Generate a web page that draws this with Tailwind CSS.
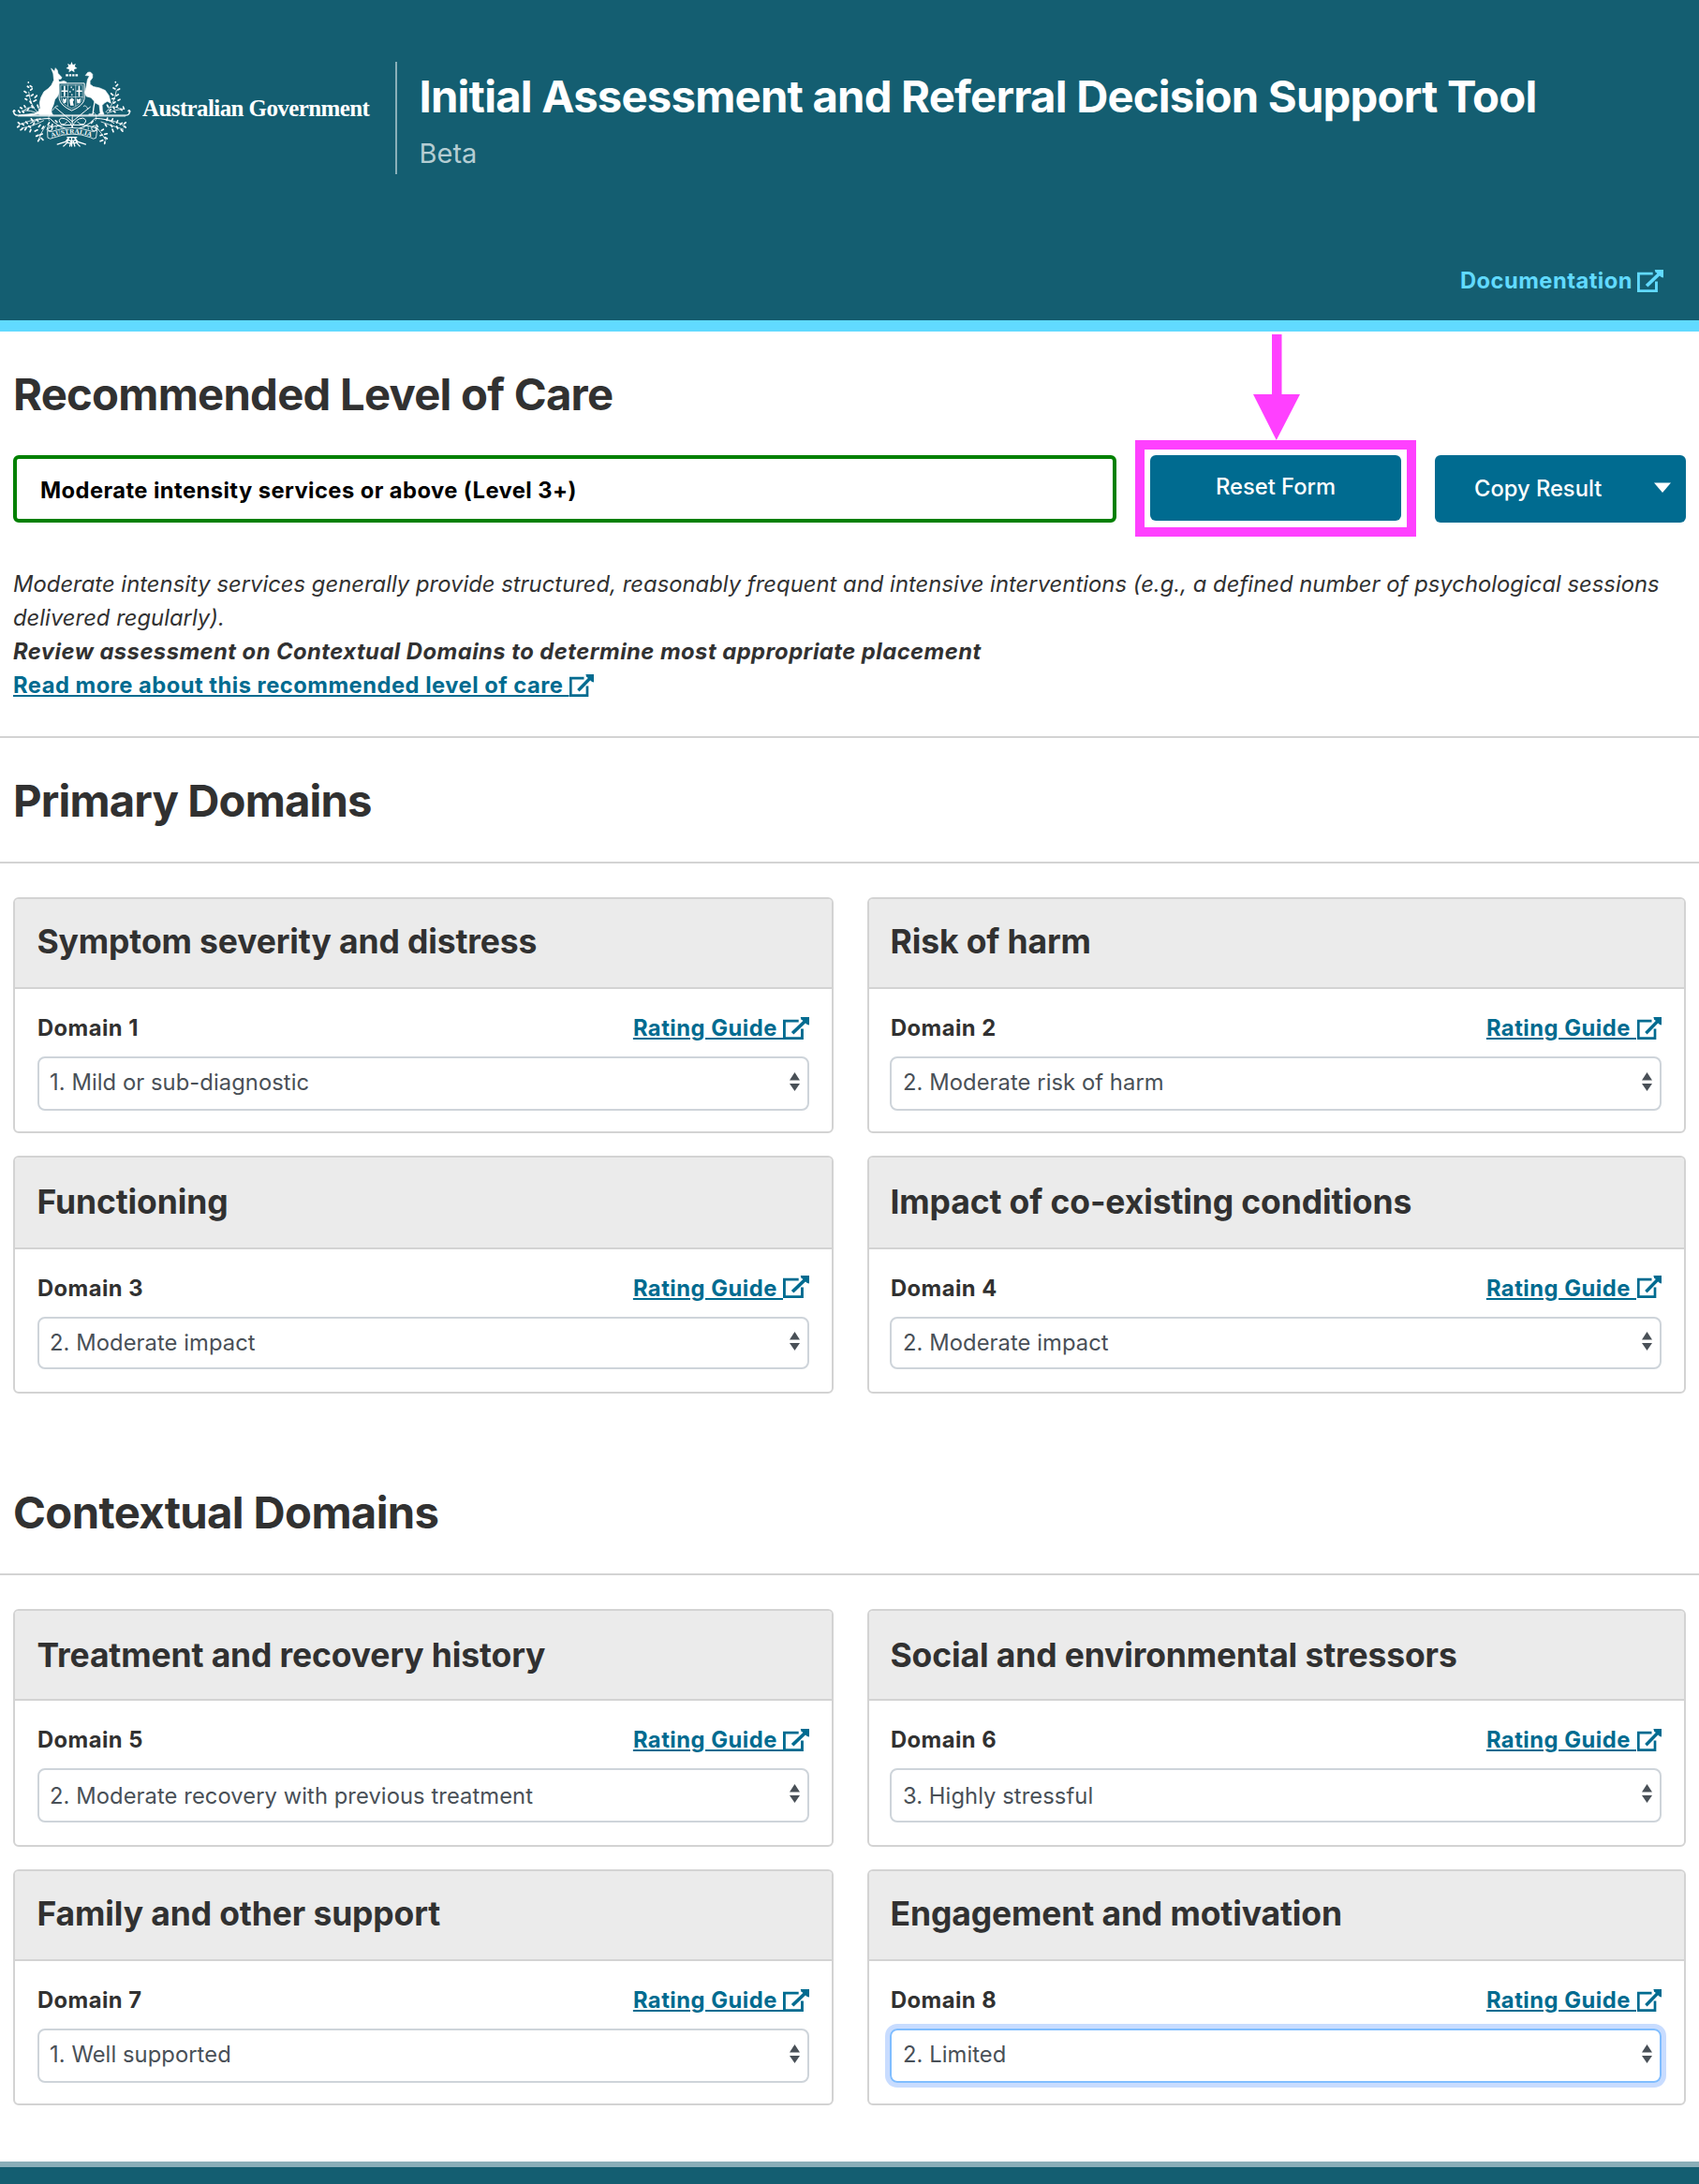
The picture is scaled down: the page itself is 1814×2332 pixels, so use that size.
<!DOCTYPE html>
<html lang="en">
<head>
<meta charset="utf-8">
<title>Initial Assessment and Referral Decision Support Tool</title>
<script src="https://cdn.jsdelivr.net/npm/@tailwindcss/browser@4"></script>
</head>
<body class="bg-white font-['Inter',sans-serif] text-[23.75px] leading-9 text-[#313131] overflow-x-hidden">
<svg width="0" height="0" class="absolute">
  <symbol id="ext" viewBox="0 0 26 24" preserveAspectRatio="none">
    <path d="M15.5 4.2H1.3V22.7H19V12.5" fill="none" stroke="currentColor" stroke-width="2.7"/>
    <path d="M9.4 17.2L22.5 3.8" fill="none" stroke="currentColor" stroke-width="3.4"/>
    <path d="M17.4 0H26V8.4L24 8L18 2.2Z" fill="currentColor"/>
  </symbol>
</svg>

<header class="h-[354px] bg-[#145e71] border-b-12 border-[#61daff] flex flex-col pt-[65px]">
  <div class="flex pl-[13px]">
    <svg class="w-[127px] h-[93px] shrink-0" viewBox="40 30 380 280" fill="none" stroke="#fff" stroke-linecap="round">
      <g fill="#fff" stroke="none">
        <path d="M230 33L234 43L243 39L240 48L248 54L238 57L239 67L230 61L221 67L222 57L212 54L220 48L217 39L226 43Z"/>
        <path d="M211 73h8v7h-8zM222 73h7v7h-7zM232 73h7v7h-7zM242 73h8v7h-8z"/>
        <path stroke="#fff" stroke-width="2" d="M165 55L175 64L178 53L184 60L186 70L198 83L196 88L187 89L190 98L205 95L213 98L212 104L197 105L190 110L192 122L190 131L184 145L176 154L172 170L166 184L165 196L170 203H128L122 201L100 205H60L110 199L124 192L129 182L127 165L131 148L141 129L155 119L165 108L173 92L171 72Z"/>
        <path stroke="#fff" stroke-width="2" d="M275 76L282 67L290 66L297 73L297 84L289 95L289 105L300 113L320 117L338 125L350 142L356 166L345 160L336 165L328 173L329 190L334 202H316L322 198L319 172L306 165L301 158L292 148L277 144L272 132L276 117L279 101L281 90L287 79Z"/>
      </g>
      <path d="M304 162Q300 180 298 202H286" stroke-width="4"/>
      <path d="M190 102H271V152Q268 174 230 190Q194 174 190 152Z" fill="#145e71" stroke-width="3"/>
      <path d="M196 108H265V151Q262 169 230 183Q199 169 196 151Z" stroke-width="1.5"/>
      <path d="M218 108V175M243 108V175M196 146H265" stroke-width="1.7"/>
      <path d="M207 112V142M199 127H215M254 112V142M247 127H262" stroke-width="5"/>
      <path d="M229 114v2M235 121v2M225 128v2M231 138v2" stroke-width="4"/>
      <g fill="#fff" stroke="none">
        <path d="M201 150l6 4 7-5-2 15-8 3zM223 155l8-6 7 6-4 7 3 12h-11l-2-10zM246 151l6 3 8-4-3 15-9 2z"/>
      </g>
      <path d="M44 191Q43 204 55 205H405Q417 204 416 192M48 191Q44 186 42 193M412 191Q416 186 418 193" stroke-width="4"/>
      <path d="M58 208H225M236 208H402" stroke-width="2"/>
      <path d="M232 255V206M232 242Q222 215 198 214Q184 219 195 232Q207 238 215 226M232 242Q242 215 266 214Q282 219 271 232Q258 238 249 226M232 225Q210 207 178 180M232 225Q254 207 290 178M232 252Q190 248 160 215Q120 215 98 230M232 252Q275 248 305 215Q345 215 366 230M228 236Q165 236 150 250M236 236Q290 234 315 250" stroke-width="3"/>
      <path d="M120 195Q98 175 92 130M110 180Q85 175 72 195M118 198Q100 188 72 190M340 195Q366 172 374 125M352 180Q375 172 392 190M344 198Q370 186 400 184M170 188Q180 170 186 175M282 185Q275 168 268 176M130 215Q90 222 60 236M140 222Q108 240 70 246M145 240Q130 262 124 284M335 218Q372 222 402 240M325 226Q358 238 396 250M312 246Q326 262 340 285" stroke-width="2.4"/>
      <!-- wattle blossom -->
      <path d="M91 99v1M88 112l4 3M97 110l5 4M78 128l6 4M98 124l5-4M85 143l6-2M100 142l6-4M112 148l6-6M81 152l5 3M108 160l8-4M96 160l4 6M65 180l5 3M72 192l4 4M78 174l3 5M88 188l4-5M102 174l3 6M120 172l3 8M126 185l2 7M59 190l5 6M371 98v1M378 106l-5 5M364 117l6 3M384 120l-6 3M357 135l6 5M380 138l-7 4M360 152l8-1M385 154l-6 3M370 162l-5 4M344 172l4 7M364 178l3 6M378 172l-3 7M388 184l3 4M396 178l2 6M352 190l4-4M366 192l4 3" stroke-width="5"/>
      <path d="M58 228l5 4M56 243l5-3M70 232l6 4M66 252l6-4M83 226l5 5M80 252l4-6M92 240l6 4M100 216l5 7M106 236l4-7M96 258l3-7M118 218l4 6M124 242l5-6M112 256l8-4M135 248l5-7M116 272l7-3M128 268l8-3M122 288l4-6M138 284l-6-6M404 228l-5 4M404 244l-6-3M392 230l-6 4M394 256l-5-5M378 222l-3 7M378 248l-3-7M362 216l-3 6M360 242l-4-6M364 258l-3-8M345 214l-2 7M342 240l-4-6M326 254l6-4M344 264l-8 2M322 270l6-2M344 280l-7-4M322 288l8-3M336 296l1-6M168 234l-2 8M178 222l5 5M298 224l-5 6M310 236l4 6M158 228l-4 8" stroke-width="5"/>
      <path d="M166 196Q150 210 158 222M300 194Q316 208 306 222M180 250Q180 228 196 244M284 250Q284 228 268 244" stroke-width="2"/>
      <circle cx="160" cy="247" r="8" stroke-width="3"/><circle cx="302" cy="247" r="8" stroke-width="3"/>
      <path d="M153 255Q160 260 170 256Q232 234 292 256Q304 260 312 252L308 278Q300 284 290 276Q232 254 172 277Q160 284 154 278Z" fill="#145e71" stroke-width="2.5"/>
      <path id="rib" d="M165 277Q231 249 300 277" stroke="none"/>
      <text fill="#fff" stroke="none" font-family="Liberation Serif" font-weight="700" font-size="21" textLength="130" lengthAdjust="spacing"><textPath href="#rib" startOffset="1" textLength="130">AUSTRALIA</textPath></text>
      <path d="M184 298L210 290L222 276M275 298L250 290L238 276M204 304Q220 292 220 276M256 304Q242 292 242 276M216 276h30M220 284q10 8 22 0M224 304l4-14M240 304l-4-14M218 294h26M230 276v28" stroke-width="4"/>
    </svg>
    <div class="ml-3 mt-9 w-[270px] whitespace-nowrap font-['Liberation_Serif',serif] font-bold text-[25px] leading-[30px] tracking-[-0.6px] text-white">Australian Government</div>
    <div class="mt-px h-[120px] w-0.5 bg-[#8ab0b9]"></div>
    <div class="ml-[23.5px] whitespace-nowrap">
      <h1 class="mt-2 text-[47.25px] leading-[60px] tracking-[-0.79px] font-bold text-white">Initial Assessment and Referral Decision Support Tool</h1>
      <p class="mt-[11px] text-[29px] leading-10 text-[#b5cdd3]">Beta</p>
    </div>
  </div>
  <div class="mt-auto mb-6 mr-[38px] flex justify-end font-bold tracking-[0.45px] text-[#61daff]">
    <span>Documentation</span><svg class="ml-[5px] mt-1.5 w-7 h-6"><use href="#ext"/></svg>
  </div>
</header>

<main>
  <section class="px-3.5 h-[432px] pt-[37px]">
    <h2 class="text-[47.25px] leading-[60px] tracking-[-0.76px] font-bold whitespace-nowrap">Recommended Level of Care</h2>
    <div class="mt-[35px] flex items-start">
      <div class="w-[1178px] h-[72px] border-4 border-[#008000] rounded-md pl-[25px] pt-[15.5px] font-bold tracking-[0.42px] text-black whitespace-nowrap">Moderate intensity services or above (Level 3+)</div>
      <div class="relative ml-9">
        <button class="block w-[268px] h-[70px] rounded-md bg-[#006b90] text-white font-medium tracking-[-0.02px] pb-[3px]">Reset Form</button>
        <div class="absolute -left-4 -top-4 w-[300px] h-[103px] border-10 border-[#ff40ff]"></div>
        <svg class="absolute left-[110px] -top-[129px] w-[50px] h-[113px]" fill="#ff40ff"><path d="M20 0H30.5V64H50L24.8 113L0 64H20Z"/></svg>
      </div>
      <button class="ml-9 w-[268px] h-[72px] rounded-md bg-[#006b90] text-white font-medium tracking-[-0.02px] flex items-center pl-[42px] whitespace-nowrap"><span>Copy Result</span><svg class="ml-auto mr-4 -mt-0.5 w-[18px] h-3" viewBox="0 0 18 12" fill="#fff"><path d="M0 0.5H18L9 11Z"/></svg></button>
    </div>
    <div class="mt-[47.5px] whitespace-nowrap italic">
      <p class="tracking-[0.04px]">Moderate intensity services generally provide structured, reasonably frequent and intensive interventions (e.g., a defined number of psychological sessions</p>
      <p class="tracking-[0.04px]">delivered regularly).</p>
      <p class="font-bold tracking-[0.475px]">Review assessment on Contextual Domains to determine most appropriate placement</p>
      <p class="font-bold not-italic tracking-[0.48px] text-[#006b90] flex"><span class="underline decoration-2 underline-offset-[2px]">Read more about this recommended level of care&nbsp;</span><svg class="mt-[6px] w-[26px] h-6"><use href="#ext"/></svg></p>
    </div>
  </section>
  <section class="h-[136px] border-y-2 border-[#d3d3d3] px-3.5 pt-[37px]">
    <h2 class="text-[47.25px] leading-[60px] tracking-[-0.86px] font-bold">Primary Domains</h2>
  </section>
  <section id="primary" class="px-3.5 pt-9 grid grid-cols-[876px_874px] gap-x-9 gap-y-6 h-[636px] content-start"></section>
  <section class="h-[124px] border-b-2 border-[#d3d3d3] px-3.5 pt-[27px]">
    <h2 class="text-[47.25px] leading-[60px] tracking-[-0.64px] font-bold">Contextual Domains</h2>
  </section>
  <section id="contextual" class="px-3.5 pt-9 grid grid-cols-[876px_874px] gap-x-9 gap-y-6 h-[626px] content-start"></section>
</main>
<footer class="h-6 bg-[#145e71] border-t-6 border-[#8aaeb8]"></footer>

<script>
const rows = {
  r1: {card:'h-[252px]', head:'h-24 pt-[25px]', sel:'h-[58px] pt-[7.5px]', icon:'mt-[6px]', arr:'mt-[7.5px]'},
  r2: {card:'h-[254px]', head:'h-[98px] pt-[27px]', sel:'h-[56px] pt-[7.5px]', icon:'mt-[4px]', arr:'mt-[6.5px]'},
  r3: {card:'h-[254px]', head:'h-24 pt-[27px]', sel:'h-[58px] pt-[9.5px]', icon:'mt-[6px]', arr:'mt-[5.5px]'},
  r4: {card:'h-[252px]', head:'h-24 pt-[25px]', sel:'h-[58px] pt-[7.5px]', icon:'mt-[6px]', arr:'mt-[7.5px]'}
};
const domains = [
  ['r1','Symptom severity and distress','1. Mild or sub-diagnostic'],
  ['r1','Risk of harm','2. Moderate risk of harm'],
  ['r2','Functioning','2. Moderate impact'],
  ['r2','Impact of co-existing conditions','2. Moderate impact'],
  ['r3','Treatment and recovery history','2. Moderate recovery with previous treatment'],
  ['r3','Social and environmental stressors','3. Highly stressful'],
  ['r4','Family and other support','1. Well supported'],
  ['r4','Engagement and motivation','2. Limited']
];
domains.forEach(([r,title,value],i)=>{
  const s=rows[r], focus=i===7, right=i%2===1;
  document.getElementById(i<4?'primary':'contextual').insertAdjacentHTML('beforeend',`
  <article class="${s.card} border-2 border-[#d3d3d3] rounded-md overflow-hidden whitespace-nowrap">
    <h3 class="${s.head} ${right?'pl-[22.5px]':'pl-[23.5px]'} bg-[#ebebeb] border-b-2 border-[#d3d3d3] text-[35.5px] leading-[42px] tracking-[-0.13px] font-bold">${title}</h3>
    <div class="${right?'pl-[22px] pr-6':'px-6'} pt-[23.5px]">
      <div class="flex justify-between font-bold tracking-[0.45px] ${right?'pl-px':''}">
        <span>Domain ${i+1}</span>
        <a class="flex text-[#006b90] tracking-[0.5px]"><span class="underline decoration-2 underline-offset-[2px]">Rating Guide&nbsp;</span><svg class="${s.icon} ${right?'w-[26px] ml-px':'w-7'} h-6"><use href="#ext"/></svg></a>
      </div>
      <div class="${s.sel} mt-[12.5px] border-2 ${focus?'border-[#80bdff] ring-5 ring-[#c8dcff]':'border-[#ced4da]'} rounded-lg ${right?'pl-3':'pl-[11px]'} pr-2 flex justify-between tracking-[0.07px] text-[#495057]">
        <span>${value}</span>
        <svg class="${s.arr} w-[11px] h-5" viewBox="0 0 11 20" fill="#495057"><path d="M0 8.5L5.5 0L11 8.5ZM0 12H11L5.5 20Z"/></svg>
      </div>
    </div>
  </article>`);
});
</script>
</body>
</html>
